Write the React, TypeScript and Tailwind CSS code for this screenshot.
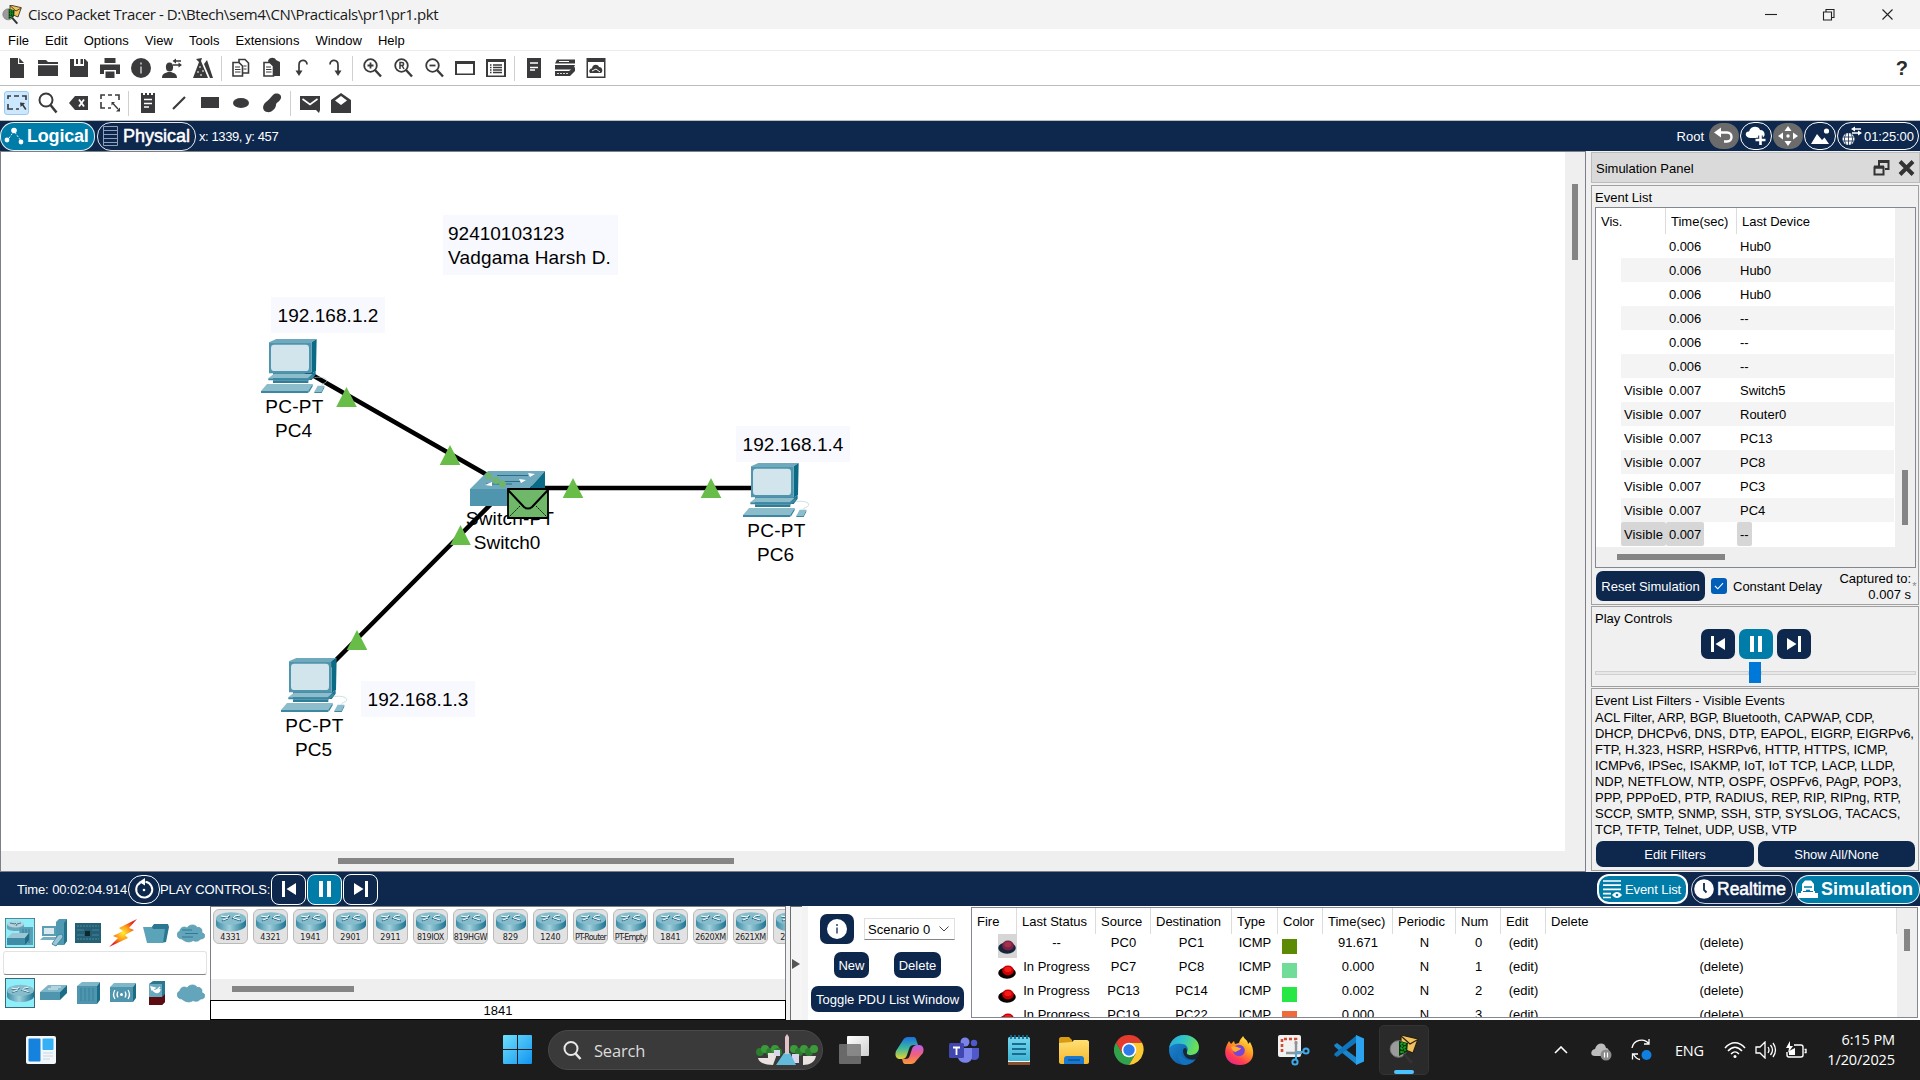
import React from "react";

type P = { children?: React.ReactNode; className?: string };

const DARK = "#3a3a3c";

/* ---------- small drawing helpers ---------- */

function Ico({ children, w = 22, h = 22, vb }: { children: React.ReactNode; w?: number; h?: number; vb?: string }) {
  return (
    <svg width={w} height={h} viewBox={vb ?? `0 0 ${w} ${h}`} fill={DARK} stroke="none" className="block shrink-0">
      {children}
    </svg>
  );
}

function Slot({ children, active }: { children: React.ReactNode; active?: boolean }) {
  return (
    <div className="flex h-full w-[31px] shrink-0 items-center justify-center">
      {active ? (
        <div className="flex h-6 w-[25px] items-center justify-center rounded-[3px] border border-[#99c9ef] bg-[#cce8ff]">{children}</div>
      ) : (
        children
      )}
    </div>
  );
}

const Sep = () => (
  <div className="flex h-full w-[7px] shrink-0 items-center justify-center">
    <div className="h-[25px] w-px bg-[#d0d0d0]" />
  </div>
);

const zoomGlyph = (inner: React.ReactNode) => (
  <Ico>
    <circle cx="9.5" cy="8.5" r="6.3" fill="none" stroke={DARK} strokeWidth="1.8" />
    <path d="M14 13l6 6.5" stroke={DARK} strokeWidth="2.4" />
    {inner}
  </Ico>
);

const fileIcons: React.ReactNode[] = [
  <Ico key="new"><path d="M4 1h8v6h6v14H4zM13.200 1l4.800 5h-4.800z" /></Ico>,
  <Ico key="open"><path d="M1 3h8l2 2h10v2H1zM1 8.200h20V19H1z" /></Ico>,
  <Ico key="save"><path d="M2 2h4v7h10V2h1l3 3v15H2zM8 2h2v5H8zM12.500 2H15v5h-2.500z" /></Ico>,
  <Ico key="print"><path d="M5.500 1h11v5h-11zM1 7.500h20V17h-4v-4H5v4H1zM6.500 14.500h9V21h-9z" /></Ico>,
  <Ico key="info"><circle cx="11" cy="11" r="10" /><path d="M11 9.500v7M11 5.500v2" stroke="#c9c9c9" strokeWidth="1.500" /></Ico>,
  <Ico key="user">
    <ellipse cx="8.500" cy="10" rx="3.600" ry="4.500" />
    <path d="M1 21c0-5 4-5 6-6h3c2 1 6 1 6 6z" />
    <path d="M14 4h6M12 8h6" stroke={DARK} strokeWidth="1.400" />
    <path d="M15 1.500v5L11.500 4zM17.500 5.500v5L21 8z" />
  </Ico>,
  <Ico key="wizard">
    <path d="M4 2l6-1-1 3 7 17H1L7 5z" />
    <path d="M12 7l3-4 5 15 1 3h-3z" />
    <path d="M7 10h2M5 15h2M10 14h2M8 18h2" stroke="#fff" strokeWidth="1.200" />
  </Ico>,
];

const editIcons: React.ReactNode[] = [
  <Ico key="copy">
    <g fill="#fff" stroke={DARK} strokeWidth="1.600">
      <path d="M9 2.500h6l3.500 3.500v10H9z" />
      <path d="M3 5.500h6l3.500 3.500v10H3z" />
    </g>
    <path d="M5 10h5M5 12.500h5.500M5 15h5.500M13.500 9h3M13.500 12h3" stroke={DARK} strokeWidth="1.200" />
  </Ico>,
  <Ico key="paste">
    <path d="M7 4c1-4 7-4 8-1l4 2v14h-6z" />
    <path d="M3 5.500h6l3.500 3.500v10H3z" fill="#fff" stroke={DARK} strokeWidth="1.600" />
    <path d="M5 10h5M5 12.500h5.500M5 15h5.500" stroke={DARK} strokeWidth="1.200" />
  </Ico>,
  <Ico key="undo">
    <path d="M7 15V8c0-6 8-6 8-.5" fill="none" stroke={DARK} strokeWidth="1.700" />
    <path d="M3.500 13.500h7L7 19z" />
  </Ico>,
  <Ico key="redo">
    <path d="M15 15V8c0-6-8-6-8-.5" fill="none" stroke={DARK} strokeWidth="1.700" />
    <path d="M11.500 13.500h7L15 19z" />
  </Ico>,
];

const viewIcons: React.ReactNode[] = [
  <React.Fragment key="in">{zoomGlyph(<path d="M9.500 5.500v6M6.500 8.500h6" stroke={DARK} strokeWidth="1.800" />)}</React.Fragment>,
  <React.Fragment key="reset">
    {zoomGlyph(<path d="M8 12V5.500h2c2.200 0 2.200 3 0 3H8m2 0l2 3.500" fill="none" stroke={DARK} strokeWidth="1.500" />)}
  </React.Fragment>,
  <React.Fragment key="out">{zoomGlyph(<path d="M6.500 8.500h6" stroke={DARK} strokeWidth="1.800" />)}</React.Fragment>,
  <Ico key="rect"><path d="M1 4h20v14H1zM3 7v9.500h16V7z" fillRule="evenodd" /></Ico>,
  <Ico key="list">
    <path d="M1 2h20v18H1zM3 5v13.500h16V5z" fillRule="evenodd" />
    <path d="M5 8h1.500M5 10.500h1.500M5 13h1.500M5 15.500h1.500M8 8h9M8 10.500h9M8 13h9M8 15.500h9" stroke={DARK} strokeWidth="1.400" />
  </Ico>,
];

const deviceIcons: React.ReactNode[] = [
  <Ico key="doc"><path d="M4 1h14v20H4z" /><path d="M7 6h8M7 10.500h8M7 13h5" stroke="#fff" strokeWidth="1.400" /></Ico>,
  <Ico key="stack">
    <path d="M3 2.500h18v4H1zM1 8h20l-2 4.500H1zM1 14h14l6-4v4l-5 5H1z" />
    <path d="M5 4.500h10" stroke="#fff" strokeWidth="1" />
    <path d="M3 16.500h11" stroke="#fff" strokeWidth=".8" strokeDasharray="2 1" />
  </Ico>,
  <Ico key="cloud">
    <path d="M1.500 1h19v20h-19zM3 5v14.500h16V5z" fillRule="evenodd" />
    <path d="M5 16c-2-3 1-5 2-4.500C7 7 13 6.500 14 10c4 0 4 5 2 6z" />
    <path d="M7 14l4-2 4 3" stroke="#fff" fill="none" />
  </Ico>,
];

const selectIcons: React.ReactNode[] = [
  <Ico key="sel">
    <path d="M2 7V4h3M8 4h5M16 4h4v4M2 12v5h5M10 17h3" fill="none" stroke={DARK} strokeWidth="1.600" />
    <path d="M14 10.500l5 .5-1.500 1.500 3 4.500-1.300 1-3-4.500-1.600 1.500z" />
  </Ico>,
  <Ico key="mag">
    <circle cx="9" cy="8" r="6.500" fill="none" stroke={DARK} strokeWidth="2" />
    <path d="M13.500 13l6 7.500" stroke={DARK} strokeWidth="2.600" />
  </Ico>,
  <Ico key="del">
    <path d="M7 4h13v14H7L1 11z" />
    <path d="M11 7.500l5 7M16 7.500l-5 7" stroke="#fff" strokeWidth="1.800" />
  </Ico>,
  <Ico key="rs">
    <path d="M2 7V3h4M9 3h4M16 3h4v5M2 10v6h4M9 16h3" fill="none" stroke={DARK} strokeWidth="1.600" />
    <path d="M14 11.500l5 5.500" stroke={DARK} strokeWidth="1.400" />
    <path d="M12.500 10h3.500l-3.500 3.500zM21 19.500h-4l4-4z" />
  </Ico>,
];

const drawIcons: React.ReactNode[] = [
  <Ico key="note">
    <path d="M4 1h2v2h2V1h2v2h2V1h2v2h2V1h2v20H4z" />
    <path d="M7 7.500h8M7 11.500h8M7 15h5" stroke="#fff" strokeWidth="1.400" />
  </Ico>,
  <Ico key="line"><path d="M5 17L17 5" stroke={DARK} strokeWidth="2.200" /></Ico>,
  <Ico key="rect"><path d="M2 5h18v11H2z" /></Ico>,
  <Ico key="ell"><ellipse cx="11" cy="11" rx="8" ry="5" /></Ico>,
  <Ico key="blob"><path d="M12 3c3-3 9-1 8 3s-5 4-5 7-4 8-9 7-5-7-1-10 4-4 7-7z" /></Ico>,
];

const pduIcons: React.ReactNode[] = [
  <Ico key="m">
    <path d="M1 4h20v14l-1 3-3-3H1z" />
    <path d="M3.500 7l7.500 5.500L18.500 7" fill="none" stroke="#fff" strokeWidth="1.600" />
  </Ico>,
  <Ico key="o"><path d="M1 8L11 1l10 7v13H1zM5 8.500l6 4.500 6-4.500-6-4.500z" fillRule="evenodd" /></Ico>,
];

function TracerLogo({ size }: { size: number }) {
  return (
    <svg width={size} height={size} viewBox="0 0 30 30" className="block shrink-0">
      <path d="M12 0l17 4-5 14-12-5z" fill="#f0c25f" stroke="#2a2010" strokeWidth="1.200" />
      <path d="M12 1l9 8 7-4" fill="none" stroke="#2a2010" strokeWidth="1.200" />
      <circle cx="9.500" cy="14" r="8.300" fill="#9b9b9b" stroke="#777" />
      <path d="M10 6l9 2-1 9-8 4z" fill="#083a08" />
      <path d="M11 9h6M11 13h6M11 17h4M13 7v11M16 8v9" stroke="#1fbf30" strokeWidth="1.100" strokeDasharray="2 1" />
      <path d="M15 19l8 9" stroke="#333" strokeWidth="3" />
    </svg>
  );
}

/* ---------- top bars ---------- */

function TitleBar() {
  return (
    <div className="flex h-[29px] shrink-0 items-center bg-[#f3f3f3] pl-[2px] text-[#1a1a1a]">
      <TracerLogo size={20} />
      <span className="ml-[6px] whitespace-nowrap font-['Open_Sans','Noto_Sans',sans-serif] text-[15px] tracking-[-0.4px]">
        Cisco Packet Tracer - D:\Btech\sem4\CN\Practicals\pr1\pr1.pkt
      </span>
      <div className="ml-auto flex items-center pr-[26px]">
        <svg width="130" height="14" viewBox="0 0 130 14" fill="none" stroke="#222" strokeWidth="1.100">
          <path d="M1 6.500h12" />
          <path d="M59.500 4h8v8h-8zM62 4V1.500h8v8h-2.500" />
          <path d="M118.500 1.500l10 10M128.500 1.500l-10 10" />
        </svg>
      </div>
    </div>
  );
}

function MenuBar() {
  const items = ["File", "Edit", "Options", "View", "Tools", "Extensions", "Window", "Help"];
  return (
    <div className="flex h-[22px] shrink-0 items-center gap-4 border-b border-[#ececec] bg-white pl-2 pt-px tracking-[0.04px]">
      {items.map((i) => (
        <span key={i}>{i}</span>
      ))}
    </div>
  );
}

function Toolbars() {
  return (
    <>
      <div className="flex h-[35px] shrink-0 items-center border-b border-[#bdbdbd] bg-white pl-px">
        {fileIcons.map((i, k) => <Slot key={k}>{i}</Slot>)}
        <Sep />
        {editIcons.map((i, k) => <Slot key={k}>{i}</Slot>)}
        <Sep />
        {viewIcons.map((i, k) => <Slot key={k}>{i}</Slot>)}
        <Sep />
        {deviceIcons.map((i, k) => <Slot key={k}>{i}</Slot>)}
        <span className="ml-auto mr-[12px] text-[20px] font-bold text-[#2b2b2b]">?</span>
      </div>
      <div className="flex h-[35px] shrink-0 items-center border-b border-[#bdbdbd] bg-white pl-px">
        {selectIcons.map((i, k) => <Slot key={k} active={k === 0}>{i}</Slot>)}
        <Sep />
        {drawIcons.map((i, k) => <Slot key={k}>{i}</Slot>)}
        <Sep />
        {pduIcons.map((i, k) => <Slot key={k}>{i}</Slot>)}
      </div>
    </>
  );
}

function Round({ grey, children }: { grey?: boolean; children: React.ReactNode }) {
  return grey ? (
    <div className="mx-px flex h-[26px] w-[30px] items-center justify-center rounded-[13px] bg-[#6b6b6b]">{children}</div>
  ) : (
    <div className="flex h-7 w-8 items-center justify-center rounded-[14px] border-[1.5px] border-white">{children}</div>
  );
}

function NavBar() {
  return (
    <div className="flex h-[30px] shrink-0 items-center bg-[#0d274d] pr-px text-white">
      <div className="flex h-[29px] w-[95px] items-center rounded-[14px] border-[1.5px] border-white/90 bg-[#007ca8] pl-[3px]">
        <svg width="21" height="19" viewBox="0 0 21 19" fill="#fff">
          <path d="M3 14L10 4l7 10" fill="none" stroke="#fff" strokeWidth=".9" strokeDasharray="2 1.500" />
          <circle cx="10" cy="3.500" r="2.800" /><circle cx="3" cy="13" r="2.400" /><circle cx="17" cy="15" r="2.400" />
        </svg>
        <span className="ml-[2px] text-[18px] font-bold tracking-[-0.2px]">Logical</span>
      </div>
      <div className="ml-[2px] flex h-[29px] w-[99px] items-center rounded-[14px] border-[1.5px] border-white/90 pl-[5px]">
        <svg width="15" height="20" viewBox="0 0 15 20" fill="none" stroke="#8fa0ba" strokeWidth="1">
          <path d="M.5.500h14v19H.500zM.500 4.500h14M.500 8.500h14M.500 12.500h14M.500 16.500h14" />
        </svg>
        <span className="ml-[5px] text-[18px] [-webkit-text-stroke:0.5px_white]">Physical</span>
      </div>
      <span className="ml-[3px] text-[13px] tracking-[-0.4px]">x: 1339, y: 457</span>
      <div className="ml-auto flex items-center">
        <span className="mr-1">Root</span>
        <Round grey>
          <svg width="22" height="18" viewBox="0 0 22 18" fill="#fff">
            <path d="M7 5.500h7c6 0 6 9 0 9h-3" fill="none" stroke="#fff" strokeWidth="2.400" />
            <path d="M8 .500v10L1 5.500z" />
          </svg>
        </Round>
        <Round>
          <svg width="22" height="22" viewBox="0 0 22 22" fill="#fff">
            <path d="M5 13C-1 12 0 6 4 6.500 6 0 14 1 15 5c6 0 6 8 1 8z" />
            <path d="M15.500 10.500v9M11 15h9" stroke="#0d274d" strokeWidth="4.500" />
            <path d="M15.500 10v10M10.500 15h10" stroke="#fff" strokeWidth="2.600" />
          </svg>
        </Round>
        <Round grey>
          <svg width="22" height="22" viewBox="0 0 22 22" fill="#fff">
            <circle cx="11" cy="11" r="1.700" />
            <path d="M11 1l3.500 5h-7zM11 21l3.500-5h-7zM1 11l5-3.500v7zM21 11l-5-3.500v7z" />
          </svg>
        </Round>
        <Round>
          <svg width="22" height="20" viewBox="0 0 22 20" fill="#fff">
            <path d="M2 18L8 8l5 6 2.500-2.500L20 18z" /><circle cx="17.500" cy="5" r="2.600" />
          </svg>
        </Round>
        <div className="ml-px flex h-7 w-[82px] items-center rounded-[14px] border-[1.500px] border-white pl-[2px]">
          <svg width="22" height="20" viewBox="0 0 22 20" fill="none" stroke="#fff">
            <circle cx="8.500" cy="13" r="6" fill="#fff" stroke="none" />
            <path d="M3 11h11M3 15h11M8.500 7v12M6 8c-2 3-2 7 0 10M11 8c2 3 2 7 0 10" stroke="#0d274d" strokeWidth=".8" />
            <path d="M13 3h8M12 7h8" strokeWidth="1.400" />
            <path d="M15 .500v5L11 3zM18 4.500v5L22 7z" fill="#fff" stroke="none" />
          </svg>
          <span className="ml-[2px] tracking-[-0.1px]">01:25:00</span>
        </div>
      </div>
    </div>
  );
}

/* ---------- workspace ---------- */

function PC() {
  return (
    <svg width="67" height="55" viewBox="0 0 201 165" className="block">
      <path d="M24 10L46 0h121l-15 10z" fill="#6fa9bd" />
      <path d="M152 10l15-10-2 96-13 8z" fill="#0b6a86" />
      <path d="M24 10h128v93H24z" fill="#4f95ad" />
      <rect x="30" y="17" width="114" height="79" rx="10" fill="#d3e5ec" />
      <path d="M36 103h118l10-6v10l-12 16H36z" fill="#1e7391" />
      <path d="M22 118l16-13h116l-14 14z" fill="#8dbccb" />
      <path d="M22 118h118v6H22zM140 118l18-12v8l-18 12z" fill="#3c88a2" />
      <path d="M36 124h106v8H36z" fill="#2f7e99" />
      <path d="M0 156l18-21h137l-14 21z" fill="#8dbccb" />
      <path d="M0 156h141v6H0zM141 156l14-21v7l-12 20z" fill="#3c88a2" />
      <path d="M160 116c20-4 42 2 36 12-4 6-16 6-14 12" fill="none" stroke="#b5ccd5" strokeWidth="2" />
      <path d="M160 158l10-18h20l-9 18z" fill="#8dbccb" />
      <path d="M160 158h21l9-18v6l-8 16h-22z" fill="#3c88a2" />
    </svg>
  );
}

const pcs = [
  { name: "PC4", pos: "left-[260px] top-[187px]" },
  { name: "PC5", pos: "left-[280px] top-[506px]" },
  { name: "PC6", pos: "left-[742px] top-[311px]" },
];

const notes = [
  { t: "192.168.1.2", pos: "left-[270px] top-[145px]" },
  { t: "192.168.1.4", pos: "left-[735px] top-[274px]" },
  { t: "192.168.1.3", pos: "left-[360px] top-[529px]" },
];

const leds = [
  [346.5, 387],
  [450, 445],
  [573, 478],
  [711, 478],
  [460.5, 525],
  [357, 630],
];

function Workspace() {
  return (
    <div className="relative h-[699px] w-[1564px] overflow-hidden bg-white text-[19px] text-black">
      {/* free canvas: the children sit at the topology's own coordinates */}
      <div className="absolute left-[442px] top-[63px] h-[60px] w-[175px] bg-[#f8f8ff] pl-[5px] pt-[7px] leading-6">
        92410103123
        <br />
        <span className="whitespace-nowrap tracking-[0.18px]">Vadgama Harsh D.</span>
      </div>
      {notes.map((n) => (
        <div key={n.t} className={`absolute flex h-9 w-[114px] items-center justify-center bg-[#f8f8ff] tracking-[0.05px] ${n.pos}`}>
          {n.t}
        </div>
      ))}
      <svg width="1564" height="699" viewBox="1 152 1564 699" className="absolute left-0 top-0">
        <g stroke="#000" strokeWidth="4.500">
          <path d="M300 368L489 476M530 488h230M495 500L330 666" />
        </g>
      </svg>
      {pcs.map((p) => (
        <div key={p.name} className={`absolute flex w-[67px] flex-col items-center leading-6 ${p.pos}`}>
          <PC />
          <span className="mt-px tracking-[0.3px]">PC-PT</span>
          <span className="mr-[2px]">{p.name}</span>
        </div>
      ))}
      <svg width="1564" height="699" viewBox="1 152 1564 699" className="absolute left-0 top-0">
        <path d="M488 471h57l-16 18h-59z" fill="#6ea9bd" />
        <path d="M470 489h59v17h-59z" fill="#4f95ad" />
        <path d="M545 471v17l-16 18v-17z" fill="#0b6a86" />
        <path d="M497 475.500h28M514 475.500h14M486 484h26M500 481.500h22" stroke="#2a6f88" strokeWidth="1" />
        <path d="M528 473l7 1-5 3zM519 479l7 1-5 3zM492 482l-7 3 7 1z" fill="#fff" />
        <g fill="#6fb56a">
          <circle cx="488.500" cy="476" r="3.500" /><circle cx="496" cy="480.500" r="3.500" /><circle cx="502.500" cy="484" r="3.500" />
        </g>
        {leds.map(([x, y]) => (
          <path key={x} d={`M${x} ${y}l10.300 20h-20.600z`} fill="#68bd49" />
        ))}
      </svg>
      <div className="absolute left-[463px] top-[355px] flex w-[92px] flex-col items-center leading-6">
        <span className="whitespace-nowrap tracking-[0.2px]">Switch-PT</span>
        <span className="mr-[6px]">Switch0</span>
      </div>
      <svg width="42" height="31" viewBox="0 0 42 31" className="absolute left-[506px] top-[336px]">
        <path d="M1 1h40v29H1z" fill="#6fb869" stroke="#000" strokeWidth="1.800" />
        <path d="M1 2l16 17c2 2 6 2 8 0L41 2" fill="none" stroke="#000" strokeWidth="2" />
        <path d="M1 30l12-12M41 30L29 18" stroke="#000" strokeWidth=".9" strokeDasharray="2 1" />
      </svg>
    </div>
  );
}

function WorkspaceArea() {
  return (
    <div className="flex w-[1586px] shrink-0 flex-col border border-[#7d7f86] bg-[#efefef]">
      <div className="flex h-[699px]">
        <Workspace />
        <div className="w-5 bg-[#efefef] pl-[7px] pt-[32px]">
          <div className="h-[76px] w-[6px] bg-[#858585]" />
        </div>
      </div>
      <div className="pl-[337px] pt-[7px]">
        <div className="h-[6px] w-[396px] bg-[#858585]" />
      </div>
    </div>
  );
}

/* ---------- simulation panel ---------- */

const events: [string, string, string][] = [
  ["", "0.006", "Hub0"],
  ["", "0.006", "Hub0"],
  ["", "0.006", "Hub0"],
  ["", "0.006", "--"],
  ["", "0.006", "--"],
  ["", "0.006", "--"],
  ["Visible", "0.007", "Switch5"],
  ["Visible", "0.007", "Router0"],
  ["Visible", "0.007", "PC13"],
  ["Visible", "0.007", "PC8"],
  ["Visible", "0.007", "PC3"],
  ["Visible", "0.007", "PC4"],
  ["Visible", "0.007", "--"],
];

const Group = ({ children, className = "" }: P) => (
  <div className={`flex w-[328px] flex-col border border-[#a0a0a0] bg-[#f0f0f0] ${className}`}>{children}</div>
);

const Btn = ({ children, className = "" }: P) => (
  <div className={`flex items-center justify-center whitespace-nowrap rounded-[7px] bg-[#0d274d] text-white ${className}`}>{children}</div>
);

const BackGlyph = () => (
  <svg width="18" height="18" viewBox="0 0 18 18" fill="#fff"><path d="M2 1h3v16H2zM16 3v12L6.500 9z" /></svg>
);
const PauseGlyph = () => (
  <svg width="18" height="18" viewBox="0 0 18 18" fill="#fff"><path d="M3 1h4v16H3zM11 1h4v16h-4z" /></svg>
);
const FwdGlyph = () => (
  <svg width="18" height="18" viewBox="0 0 18 18" fill="#fff"><path d="M13 1h3v16h-3zM2 3v12l9.500-6z" /></svg>
);

function SimulationPanel() {
  return (
    <div className="flex flex-1 flex-col bg-[#f0f0f0] pl-[5px]">
      <div className="mt-px flex h-[31px] shrink-0 items-center border border-[#bcbcbc] bg-[#dadada] pl-1 pt-px">
        <span>Simulation Panel</span>
        <svg width="42" height="18" viewBox="0 0 42 18" className="ml-auto mr-[4px]" fill="none" stroke="#333">
          <path d="M1.500 8.500h9v7h-9zM6 7V2h9.500v8H12" strokeWidth="2" />
          <path d="M1 8h10M5 2.500h11" strokeWidth="3" />
          <path d="M27 2.500l13 13M40 2.500l-13 13" strokeWidth="4" />
        </svg>
      </div>

      <Group className="mt-[2px] h-[420px] shrink-0 pl-[3px]">
        <span className="flex h-[21px] items-center pt-px">Event List</span>
        <div className="flex h-[361px] w-[321px] flex-col border border-[#828790] bg-white">
          <div className="flex h-[339px]">
            <div className="flex w-[299px] shrink-0 flex-col">
              <div className="flex h-[26px] shrink-0 items-center">
                <div className="flex h-full w-[70px] items-center border-r border-[#dcdcdc] pl-[5px]">Vis.</div>
                <div className="flex h-full w-[71px] items-center border-r border-[#dcdcdc] pl-[5px]">Time(sec)</div>
                <div className="pl-[5px]">Last Device</div>
              </div>
              {events.map(([v, t, d], i) => {
                const sel = i === events.length - 1;
                return (
                  <div key={i} className={`ml-[25px] flex h-6 w-[273px] shrink-0 items-center ${i % 2 ? "bg-[#f4f4f4]" : ""}`}>
                    <div className={`flex h-full w-[45px] items-center rounded-[2px] pl-[3px] tracking-[0.15px] ${sel ? "bg-[#d6d6d6]" : ""}`}>{v}</div>
                    <div className={`flex h-full w-[38px] items-center rounded-[2px] pl-[3px] tracking-[-0.1px] ${sel ? "bg-[#d6d6d6]" : ""}`}>{t}</div>
                    <div className={`ml-[33px] flex h-full items-center rounded-[2px] px-[3px] ${sel ? "bg-[#d6d6d6]" : ""}`}>{d}</div>
                  </div>
                );
              })}
            </div>
            <div className="flex-1 bg-[#efefef] pl-[7px] pt-[262px]">
              <div className="h-[55px] w-[6px] bg-[#858585]" />
            </div>
          </div>
          <div className="flex-1 bg-[#efefef] pl-[21px] pt-[7px]">
            <div className="h-[6px] w-[108px] bg-[#858585]" />
          </div>
        </div>
        <div className="mt-[3px] flex h-[30px] items-center">
          <Btn className="ml-px h-[30px] w-[109px]">Reset Simulation</Btn>
          <div className="ml-[6px] flex h-4 w-4 items-center justify-center rounded-[3px] bg-[#005fb8]">
            <svg width="10" height="8" viewBox="0 0 10 8" fill="none" stroke="#fff" strokeWidth="1.100"><path d="M1 4l2.800 2.800L9 1.200" /></svg>
          </div>
          <span className="ml-[6px]">Constant Delay</span>
          <div className="ml-auto flex items-center">
            <div className="pt-px text-right leading-4">Captured to:<br />0.007 s</div>
            <span className="w-[7px] text-center text-[11px] text-[#888]">*</span>
          </div>
        </div>
      </Group>

      <Group className="mt-[1px] h-[81px] shrink-0 pl-[3px]">
        <span className="flex h-[22px] items-center pt-px">Play Controls</span>
        <div className="flex gap-1 pl-[106px]">
          <Btn className="h-[30px] w-[34px]"><BackGlyph /></Btn>
          <Btn className="h-[30px] w-[34px] bg-[#007ca8]!"><PauseGlyph /></Btn>
          <Btn className="h-[30px] w-[34px]"><FwdGlyph /></Btn>
        </div>
        <div className="mt-[3px] flex h-[21px] w-[321px] items-center">
          <div className="h-1 w-[154px] border border-[#d0d0d0] bg-[#e7e7e7]" />
          <div className="h-[21px] w-3 bg-[#0078d7]" />
          <div className="h-1 flex-1 border border-[#d0d0d0] bg-[#e7e7e7]" />
        </div>
      </Group>

      <Group className="mt-[1px] h-[183px] shrink-0 pl-[3px] pt-px">
        <span className="flex h-5 items-center tracking-[0.02px]">Event List Filters - Visible Events</span>
        <div className="whitespace-pre leading-4 tracking-[-0.04px]">
          {`ACL Filter, ARP, BGP, Bluetooth, CAPWAP, CDP,
DHCP, DHCPv6, DNS, DTP, EAPOL, EIGRP, EIGRPv6,
FTP, H.323, HSRP, HSRPv6, HTTP, HTTPS, ICMP,
ICMPv6, IPSec, ISAKMP, IoT, IoT TCP, LACP, LLDP,
NDP, NETFLOW, NTP, OSPF, OSPFv6, PAgP, POP3,
PPP, PPPoED, PTP, RADIUS, REP, RIP, RIPng, RTP,
SCCP, SMTP, SNMP, SSH, STP, SYSLOG, TACACS,
TCP, TFTP, Telnet, UDP, USB, VTP`}
        </div>
        <div className="mt-[3px] flex gap-1 pl-px">
          <Btn className="h-[26px] w-[158px]">Edit Filters</Btn>
          <Btn className="h-[26px] w-[157px]">Show All/None</Btn>
        </div>
      </Group>
    </div>
  );
}

/* ---------- time bar ---------- */

function TimeBar() {
  return (
    <div className="flex h-[34px] shrink-0 items-center bg-[#0d274d] pl-[17px] text-white">
      <span className="w-[111px] whitespace-nowrap tracking-[-0.08px]">Time: 00:02:04.914</span>
      <div className="flex h-[29px] w-8 items-center justify-center rounded-[14px] border border-white">
        <svg width="22" height="22" viewBox="0 0 22 22" fill="#fff">
          <path d="M7.500 4.500a8 8 0 1 0 5-.8" fill="none" stroke="#fff" strokeWidth="2" />
          <path d="M12 0v7.500L6 4z" /><circle cx="11" cy="12" r="1.300" />
        </svg>
      </div>
      <span className="w-[111px] whitespace-nowrap tracking-[-0.08px]">PLAY CONTROLS:</span>
      <div className="flex gap-px">
        <div className="flex h-[31px] w-[35px] items-center justify-center rounded-[8px] border border-white"><BackGlyph /></div>
        <div className="flex h-[31px] w-[35px] items-center justify-center rounded-[8px] border border-white bg-[#007ca8]"><PauseGlyph /></div>
        <div className="flex h-[31px] w-[35px] items-center justify-center rounded-[8px] border border-white"><FwdGlyph /></div>
      </div>
      <div className="ml-auto flex items-center">
        <div className="flex h-[30px] w-[91px] items-center rounded-[12px] border-2 border-white bg-[#007ca8] pl-[4px]">
          <svg width="19" height="20" viewBox="0 0 19 20" fill="none" stroke="#fff" strokeWidth="1.700">
            <path d="M0 2h18M0 6.200h18M0 10.400h18M0 14.600h8M0 18.500h8" />
            <path d="M9 16c3-4 7-4 10 0-3 4-7 4-10 0z" fill="#fff" stroke="none" /><circle cx="14" cy="16" r="1.300" fill="#007ca8" stroke="none" />
          </svg>
          <span className="ml-[3px] whitespace-nowrap text-[13px] tracking-[-0.1px]">Event List</span>
        </div>
        <div className="ml-[3px] flex h-[29px] w-[102px] items-center rounded-[14px] border border-white/80 pl-[2px]">
          <svg width="20" height="20" viewBox="0 0 20 20"><circle cx="10" cy="10" r="9.800" fill="#fff" /><path d="M10 4v7l2.500 2.500" fill="none" stroke="#0d274d" strokeWidth="1.800" /></svg>
          <span className="ml-[3px] text-[17.500px] [-webkit-text-stroke:0.5px_white]">Realtime</span>
        </div>
        <div className="ml-[2px] flex h-[29px] w-[125px] items-center rounded-[14px] border-[1.500px] border-white/90 bg-[#007ca8] pl-[2px]">
          <svg width="20" height="18" viewBox="0 0 20 18" fill="#fff">
            <path d="M4 4l3-3.500h6L16 4v7H4zM0 18v-5h3v-2h2v3h10v-3h2v2h3v5z" /><path d="M5 12h10v2H5z" />
            <path d="M6 7h8M8 10.500h4" stroke="#007ca8" strokeWidth="1.500" />
          </svg>
          <span className="ml-[3px] text-[18px] font-bold">Simulation</span>
        </div>
      </div>
    </div>
  );
}

/* ---------- device palette ---------- */

function Router({ w = 30, h = 20, id }: { w?: number; h?: number; id: string }) {
  return (
    <svg width={w} height={h} viewBox="0 0 30 20" className="block">
      <defs>
        <linearGradient id={id} x1="0" x2="1">
          <stop offset="0" stopColor="#3c8ba5" /><stop offset=".45" stopColor="#9fcfdc" /><stop offset="1" stopColor="#1b7390" />
        </linearGradient>
      </defs>
      <path d="M0 6v7c0 3.500 7 6.500 15 6.500s15-3 15-6.500V6z" fill={`url(#${id})`} />
      <ellipse cx="15" cy="6.500" rx="15" ry="6.200" fill="#86bccc" />
      <path d="M5 5l7 1 2-2M24 4l-6 1-2 2M6 9l6-2M25 9l-7-2" fill="none" stroke="#2a6f88" strokeWidth="1.100" />
      <path d="M5 4l6 1 2-2M24 3l-5 1-2 2M7 8l5-2M24 8l-6-2" fill="none" stroke="#fff" strokeWidth="1" />
    </svg>
  );
}

const cloud = (lines: boolean) => (
  <svg width="28" height="20" viewBox="0 0 28 20">
    <path d="M5 16C-1 16-1 9 3 8c0-4 5-5 7-3 2-4 9-4 10-.5 4-1 6 3 4.500 5 5 1 4 7-1 6.500-2 3-6 2.500-7.500 1.500-3 2.500-8 1.500-11-1.500z" fill="#63a6bb" stroke="#4e90a8" strokeWidth=".6" />
    {lines && <path d="M5 7h10M8 10.500h13M5 14h11" stroke="#2f7a94" strokeWidth="1.100" />}
  </svg>
);

const rowA: React.ReactNode[] = [
  <svg key="net" width="30" height="30" viewBox="0 0 30 30">
    <path d="M0 0h30v30H0z" fill="#8eeefa" stroke="#3a6b75" strokeWidth="1.500" />
    <path d="M2 6v4c0 4 17 4 17 0V6z" fill="#6ba5b8" /><ellipse cx="10.500" cy="6" rx="8.500" ry="3.500" fill="#b4d2db" />
    <path d="M5 5l5 1 1-1M16 5l-4 1-1 2" fill="none" stroke="#3f7f95" />
    <path d="M14 11l3-2h11v18H16z" fill="#58a0b6" /><path d="M18 11v14M21 11v14M24 11v14" stroke="#35809a" />
    <path d="M2 20l5-5h17l-4 5z" fill="#9cc6d3" /><path d="M2 20h18v7H2z" fill="#3f8ca6" /><path d="M20 20l4-5v7l-4 5z" fill="#1b6c87" />
  </svg>,
  <svg key="end" width="28" height="28" viewBox="0 0 28 28">
    <path d="M16 3l3-3h8v22l-3 4h-8z" fill="#4f9ab2" /><path d="M24 4l3-4v22l-3 4z" fill="#23738d" />
    <path d="M2 7h14v10H2z" fill="#5b9fb5" /><path d="M4 9h10v6H4z" fill="#dbe9ee" /><path d="M0 21l3-3h14l-3 3z" fill="#76afc1" />
    <path d="M12 25l6-9 4-1 1 3-7 9z" fill="#9cc6d3" stroke="#3f8ca6" />
  </svg>,
  <svg key="comp" width="26" height="20" viewBox="0 0 26 20">
    <path d="M0 0h26v20H0z" fill="#245f74" /><path d="M2 3h22M2 16h22" stroke="#4b8ba0" strokeWidth="1" strokeDasharray="2 1" />
    <path d="M2 7h7M17 7h7M2 12h7M17 12h7" stroke="#3b7a90" strokeWidth="1.600" />
    <path d="M10 8h5v5h-5z" fill="#0d2831" />
  </svg>,
  <svg key="conn" width="28" height="28" viewBox="0 0 28 28">
    <defs><radialGradient id="bolt"><stop offset="0" stopColor="#ffee3a" /><stop offset=".5" stopColor="#ff9a16" /><stop offset="1" stopColor="#e2231a" /></radialGradient></defs>
    <path d="M28 0L10 9l4 3-10 5 5 2-9 9 19-9-3-3 9-5-5-2z" fill="url(#bolt)" />
  </svg>,
  <svg key="misc" width="27" height="21" viewBox="0 0 27 21">
    <path d="M8 5l3-4h14l1 3-3 15-5 1z" fill="#2b7690" /><path d="M4 20L0 4h9l1 2h12l-2 14z" fill="#5ba3b9" />
  </svg>,
  <React.Fragment key="multi">{cloud(true)}</React.Fragment>,
];

const rowB: React.ReactNode[] = [
  <div key="r" className="flex h-[30px] w-[30px] items-center justify-center border-[1.5px] border-[#3a6b75] bg-[#8eeefa]"><Router id="gsel" w={27} h={19} /></div>,
  <svg key="sw" width="28" height="16" viewBox="0 0 28 16">
    <path d="M0 7l8-7h19l-7 7z" fill="#7fb6c8" /><path d="M0 7h20v8H0z" fill="#4f95ad" /><path d="M27 0v8l-7 7V7z" fill="#1b6c87" /><path d="M8 4h10M11 2h10" stroke="#e7f2f5" />
  </svg>,
  <svg key="hub" width="23" height="22" viewBox="0 0 23 22">
    <path d="M0 4l5-4h18l-3 4z" fill="#7fb6c8" /><path d="M0 4h20v18H0z" fill="#4f95ad" /><path d="M23 0v18l-3 4V4z" fill="#1b6c87" /><path d="M4 6v13M8 6v13M12 6v13M16 6v13" stroke="#35809a" />
  </svg>,
  <svg key="wl" width="26" height="20" viewBox="0 0 26 20">
    <path d="M0 4l4-4h22l-3 4z" fill="#7fb6c8" /><path d="M0 4h23v15H0z" fill="#4f95ad" /><path d="M26 0v15l-3 4V4z" fill="#1b6c87" />
    <circle cx="11.500" cy="11.500" r="1.500" fill="#fff" /><path d="M8 8.500q-2 3 0 6M5 7q-3 4.500 0 9M15 8.500q2 3 0 6M18 7q3 4.500 0 9" fill="none" stroke="#fff" strokeWidth="1.200" />
  </svg>,
  <svg key="sec" width="16" height="24" viewBox="0 0 16 24">
    <path d="M0 3l4-3h12v21l-3 3H0z" fill="#2b7690" /><path d="M0 3h13v13H0z" fill="#68a9bd" /><path d="M0 16h13l3-3v8l-3 3H0z" fill="#5d0d12" />
    <path d="M2 6l4 1-3 2zM4 9c2 4 7 3 7-1M11 6l-4 4" stroke="#fff" strokeWidth="1.300" fill="#fff" />
  </svg>,
  <React.Fragment key="wan">{cloud(false)}</React.Fragment>,
];

const routers = ["4331", "4321", "1941", "2901", "2911", "819IOX", "819HGW", "829", "1240", "PT-Router", "PT-Empty", "1841", "2620XM", "2621XM", "2811"];

function Palette() {
  return (
    <>
      <div className="flex w-[210px] shrink-0 flex-col bg-white pt-3">
        <div className="flex h-[30px] items-center">
          <div className="w-[3px]" />
          {rowA.map((n, k) => <div key={k} className="flex w-[34.200px] justify-center">{n}</div>)}
        </div>
        <div className="ml-[3px] mt-[3px] h-6 w-[204px] rounded-[3px] border border-[#e3e3e3] border-b-[#868686] bg-white" />
        <div className="mt-[3px] flex h-[30px] items-center">
          <div className="w-[3px]" />
          {rowB.map((n, k) => <div key={k} className="flex w-[34.200px] justify-center">{n}</div>)}
        </div>
      </div>
      <div className="flex w-[576px] shrink-0 flex-col">
        <div className="flex h-[94px] flex-col border border-b-0 border-[#7d7f86] bg-white">
          <div className="flex h-[72px] gap-[5px] overflow-hidden pl-[2px] pt-[2px]">
            {routers.map((r, i) => (
              <div key={r} className="flex h-[35px] w-[35px] shrink-0 flex-col items-center rounded-[6px] border border-[#bababa] bg-[#e2e2e2] pt-[2px]">
                <Router id={`g${i}`} />
                <span className={`mt-px whitespace-nowrap font-['DejaVu_Sans',sans-serif] text-[8px] leading-[9px] text-[#222] ${r.length > 7 ? "tracking-[-0.8px]" : r.length > 5 ? "tracking-[-0.35px]" : ""}`}>{r}</span>
              </div>
            ))}
          </div>
          <div className="flex-1 bg-[#efefef] pl-[21px] pt-[7px]">
            <div className="h-[6px] w-[122px] bg-[#858585]" />
          </div>
        </div>
        <div className="flex h-5 items-center justify-center border border-black bg-white">1841</div>
      </div>
      <div className="flex w-[22px] shrink-0 bg-[#f3f3f3] pl-1">
        <div className="flex w-[12px] items-center border-l border-t border-[#6e6e6e] bg-[#f5f5f5]">
          <svg width="9" height="10" viewBox="0 0 9 10" fill="#555"><path d="M1 0l8 5-8 5z" /></svg>
        </div>
      </div>
    </>
  );
}

/* ---------- PDU list ---------- */

type Pdu = [string, string, string, string, string, string];
const pdus: Pdu[] = [
  ["--", "PC0", "PC1", "bg-[#5c8a05]", "91.671", "0"],
  ["In Progress", "PC7", "PC8", "bg-[#70dc98]", "0.000", "1"],
  ["In Progress", "PC13", "PC14", "bg-[#27e744]", "0.002", "2"],
  ["In Progress", "PC19", "PC22", "bg-[#f06a3c]", "0.000", "3"],
];

const colW = ["w-[45px]", "w-[79px]", "w-[55px]", "w-[81px]", "w-[46px]", "w-[45px]", "w-[70px]", "w-[63px]", "w-[45px]", "w-[45px]", "w-[351px]"];
const heads = ["Fire", "Last Status", "Source", "Destination", "Type", "Color", "Time(sec)", "Periodic", "Num", "Edit", "Delete"];

function FireButton({ dim }: { dim?: boolean }) {
  return (
    <svg width="18" height="14" viewBox="0 0 18 14" className="block">
      <ellipse cx="9" cy="8" rx="8.800" ry="5.800" fill={dim ? "#17243c" : "#0a0000"} />
      <ellipse cx="10" cy="5.500" rx="5.800" ry="5" fill={dim ? "#7c2344" : "#c40000"} />
      <ellipse cx="10" cy="4.500" rx="3.600" ry="2.800" fill={dim ? "#a0324f" : "#f51a1a"} />
    </svg>
  );
}

function PduArea() {
  return (
    <div className="flex flex-1 bg-white">
      <div className="flex w-[163px] shrink-0 flex-col pl-[3px]">
        <div className="mt-2 flex items-center">
          <Btn className="ml-[9px] h-[30px] w-[34px]">
            <svg width="20" height="20" viewBox="0 0 20 20"><circle cx="10" cy="10" r="10" fill="#fff" /><path d="M10 8.500v6M10 5v2" stroke="#0d274d" strokeWidth="1.300" /></svg>
          </Btn>
          <div className="ml-[10px] flex h-[22px] w-[91px] items-center border border-[#e0e0e0] border-b-[#868686] bg-white pl-[3px]">
            <span className="whitespace-nowrap">Scenario 0</span>
            <svg width="10" height="6" viewBox="0 0 10 6" fill="none" stroke="#444" className="ml-auto mr-[5px]"><path d="M.5.500l4.500 4.500L9.500.500" /></svg>
          </div>
        </div>
        <div className="mt-2 flex">
          <Btn className="ml-[23px] h-[26px] w-[35px]">New</Btn>
          <Btn className="ml-[25px] h-[26px] w-[47px]">Delete</Btn>
        </div>
        <Btn className="mt-2 h-[26px] w-[153px]">Toggle PDU List Window</Btn>
      </div>
      <div className="mt-px flex h-[111px] w-[947px] overflow-hidden border border-[#828790]">
        <div className="flex w-[925px] shrink-0 flex-col">
          <div className="flex h-[26px] shrink-0">
            {heads.map((h, i) => (
              <div key={h} className={`flex shrink-0 items-center whitespace-nowrap border-r border-[#dcdcdc] pl-[5px] ${colW[i]}`}>{h}</div>
            ))}
          </div>
          {pdus.map(([s, a, b, c, t, n], i) => (
            <div key={n} className="flex h-6 shrink-0 [&>div]:flex [&>div]:shrink-0 [&>div]:justify-center [&>div]:whitespace-nowrap [&>div]:pt-px">
              <div className="w-[45px]">
                <div className={`ml-auto flex h-6 w-[19px] items-end pb-[4px] ${i === 0 ? "-mt-px bg-[#d6d6d6]" : ""}`}><FireButton dim={i === 0} /></div>
              </div>
              <div className="w-[79px]">{s}</div>
              <div className="w-[55px]">{a}</div>
              <div className="w-[81px]">{b}</div>
              <div className="w-[46px]">ICMP</div>
              <div className="w-[45px]"><div className={`mr-[23px] mt-[4px] h-[15px] w-[15px] ${c}`} /></div>
              <div className="w-[70px]">{t}</div>
              <div className="w-[63px]">N</div>
              <div className="w-[45px]">{n}</div>
              <div className="w-[45px]">(edit)</div>
              <div className="w-[351px]">(delete)</div>
            </div>
          ))}
        </div>
        <div className="flex-1 bg-[#efefef] pl-[7px] pt-[21px]">
          <div className="h-[22px] w-[6px] bg-[#858585]" />
        </div>
      </div>
    </div>
  );
}

/* ---------- taskbar ---------- */

const Box = ({ children, className = "" }: P) => (
  <div className={`flex h-[50px] w-[50px] shrink-0 items-center justify-center ${className}`}>{children}</div>
);

function City() {
  return (
    <svg width="62" height="32" viewBox="0 0 62 32">
      {[4, 9, 14, 19, 22, 38, 43, 48, 53, 58].map((x, i) => (
        <circle key={x} cx={x} cy={i % 2 ? 15 : 18} r="4" fill={i % 2 ? "#3d9a3b" : "#2c7d30"} />
      ))}
      <path d="M2 24h10v-5h8v4l-3 8c-7 0-14-2-15-7zM60 22H47v9c7 0 12-3 13-9z" fill="#e9e2e0" />
      <path d="M18 16h6v6h-6zM36 20h7v9h-7z" fill="#d9d6ec" />
      <path d="M28 19h6l6 12H20z" fill="#63bbdc" />
      <path d="M29 20V3l2-3 2 3v17z" fill="#e0c3c8" />
    </svg>
  );
}

const G = ({ id, a, b, v }: { id: string; a: string; b: string; v?: boolean }) => (
  <linearGradient id={id} x1="0" y1="0" x2={v ? "0" : "1"} y2="1"><stop offset="0" stopColor={a} /><stop offset="1" stopColor={b} /></linearGradient>
);

const apps: React.ReactNode[] = [
  <svg key="tv" width="30" height="28" viewBox="0 0 30 28">
    <defs><G id="tv" a="#fff" b="#cfcfcf" /></defs>
    <rect x="8" y="0" width="22" height="20" rx="1" fill="url(#tv)" /><rect x="0" y="8" width="22" height="20" rx="1" fill="#777" opacity=".85" />
  </svg>,
  <svg key="cop" width="29" height="27" viewBox="0 0 29 27">
    <defs>
      <linearGradient id="c1" x2="0" y2="1"><stop stopColor="#1c6fe0" /><stop offset=".5" stopColor="#3ab7a0" /><stop offset="1" stopColor="#e6d42c" /></linearGradient>
      <linearGradient id="c2" x2="0" y2="1"><stop stopColor="#b45df0" /><stop offset=".5" stopColor="#f0607c" /><stop offset="1" stopColor="#f99a3a" /></linearGradient>
    </defs>
    <path d="M8 3c1-2 3-3 5-3h5c3 0 3 2 4 5l1 3h-4c-3 0-4 1-5 4l-2 6c-1 3-3 4-5 4H4C0 21 0 17 1 14z" fill="url(#c1)" />
    <path d="M21 24c-1 2-3 3-5 3h-5c-3 0-3-2-4-5h3c3 0 4-1 5-4l2-6c1-3 3-4 5-4h3c4 1 4 5 3 8z" fill="url(#c2)" />
  </svg>,
  <svg key="teams" width="30" height="26" viewBox="0 0 30 26">
    <circle cx="16" cy="5" r="4.500" fill="#7b83eb" /><circle cx="25" cy="6" r="3.200" fill="#5059c9" />
    <path d="M22 11h8v8c0 4-5 5-8 3z" fill="#5059c9" /><path d="M9 11h14v9c0 7-12 8-14 1z" fill="#7b83eb" />
    <rect y="6" width="15" height="15" rx="1.500" fill="#4048b0" /><path d="M4 10.500h7M7.500 10.500v7.500" stroke="#fff" strokeWidth="1.800" />
  </svg>,
  <svg key="note" width="24" height="30" viewBox="0 0 24 30">
    <defs><G id="np" a="#74d8ee" b="#3fb4d4" v /></defs>
    <path d="M1 25h22v5H1z" fill="#8a4f2c" /><path d="M1 25h22v2H1z" fill="#f4f4f4" />
    <rect x="1" y="2" width="22" height="24" rx="1.500" fill="url(#np)" />
    <path d="M5 9h14M5 14h14M5 19h14" stroke="#1b6a92" strokeWidth="1.800" />
    <path d="M4 0v4M8 0v4M12 0v4M16 0v4M20 0v4" stroke="#186a8c" strokeWidth="1.800" />
  </svg>,
  <svg key="fold" width="30" height="27" viewBox="0 0 30 27">
    <defs><G id="fo" a="#ffdf73" b="#f5b92e" v /></defs>
    <path d="M0 2c0-1 1-2 2-2h8l3 3v6H0z" fill="#d99a14" /><path d="M0 6l13-1 2-2h13c1 0 2 1 2 2v20c0 1-1 2-2 2H2c-1 0-2-1-2-2z" fill="url(#fo)" />
    <path d="M5 27v-5c0-2 1-3 3-3h14c2 0 3 1 3 3v5z" fill="#1a78cf" /><path d="M9 23h12" stroke="#0c4f94" strokeWidth="1.400" />
  </svg>,
  <svg key="chrome" width="30" height="30" viewBox="0 0 30 30">
    <path d="M2 7.500A15 15 0 0 0 15 30l6.500-11L9 18.700z" fill="#30a24c" />
    <path d="M15 7.500h13a15 15 0 0 1 1 11A15 15 0 0 1 15 30l6.500-11z" fill="#fcc934" />
    <path d="M2 7.500A15 15 0 0 1 28 7.500H15l-6.500 11.200z" fill="#e33b2e" />
    <circle cx="15" cy="15" r="7.300" fill="#fff" /><circle cx="15" cy="15" r="5.700" fill="#2f7bea" />
  </svg>,
  <svg key="edge" width="30" height="30" viewBox="0 0 30 30">
    <defs>
      <linearGradient id="e1" x2="1" y2=".3"><stop stopColor="#2aa7dc" /><stop offset=".5" stopColor="#30c3c8" /><stop offset="1" stopColor="#6be052" /></linearGradient>
      <G id="e2" a="#1b8fd8" b="#0c4a94" />
    </defs>
    <circle cx="15" cy="15" r="15" fill="url(#e2)" />
    <path d="M0 14C1 5 8 0 15 0c9 0 15 6 15 12 0 5-4 8-8 8-3 0-5-1-4-3 2-3 0-8-5-8C7 8 1 10 0 14z" fill="url(#e1)" />
    <path d="M12 13c-2 7 3 14 14 12-3 4-8 5-11 5-6-2-9-11-3-17z" fill="#1272bd" />
    <path d="M18 17c-1 2 1 4 5 3 4 0 6-3 7-5 0 4-1 7-3 9-8 2-13-3-13-8 0-3 4-5 4 1z" fill="#1c1c1c" opacity=".85" />
  </svg>,
  <svg key="ff" width="29" height="29" viewBox="0 0 29 29">
    <defs><linearGradient id="f1" x1=".8" x2=".2" y2="1"><stop stopColor="#fff04a" /><stop offset=".4" stopColor="#ff9a20" /><stop offset=".75" stopColor="#ff3a55" /><stop offset="1" stopColor="#e5258e" /></linearGradient></defs>
    <path d="M4 5l2 3 3-3 1 3 4-1c1-4 3-5 4-7 2 4 5 4 5 8l2-2c6 10 4 23-10 23S-4 17 4 5z" fill="url(#f1)" />
    <circle cx="14" cy="14.500" r="5.800" fill="#7a45d6" /><path d="M6 11c4-2 6 1 10 1-1 3-4 2-5 4-2 0-4-2-5-5z" fill="#ffac2e" />
  </svg>,
  <svg key="snip" width="32" height="31" viewBox="0 0 32 31">
    <rect width="23" height="22" rx="2" fill="#f1f1f1" /><path d="M4 17V4h14v5" fill="none" stroke="#d24a2e" strokeWidth="2.600" strokeDasharray="3 2" />
    <path d="M18 6v14M8 18h16" stroke="#8d959c" strokeWidth="2.400" /><path d="M18 18v6M19 17h6" stroke="#4aa9e0" strokeWidth="2" />
    <circle cx="17" cy="27" r="2.600" fill="none" stroke="#3fa9ea" strokeWidth="2" /><circle cx="28" cy="16" r="2.600" fill="none" stroke="#3fa9ea" strokeWidth="2" />
  </svg>,
  <svg key="vs" width="30" height="30" viewBox="0 0 30 30">
    <path d="M0 10l3-2 20 15v7L1 12z" fill="#1b86cc" /><path d="M0 20l3 2L23 7V0L1 18z" fill="#0f75bd" /><path d="M22 0l8 3.500v23L22 30z" fill="#2ba3ee" />
  </svg>,
];

function Taskbar() {
  return (
    <div className="flex h-[60px] shrink-0 items-center bg-[#1c1c1c] font-['Open_Sans','Noto_Sans',sans-serif] text-white">
      <svg width="30" height="28" viewBox="0 0 30 28" className="ml-[26px] shrink-0">
        <rect width="30" height="28" rx="2" fill="#f2f7fb" /><rect x="2.500" y="2.500" width="12" height="23" rx="1" fill="#1583dd" />
        <rect x="16.500" y="2.500" width="11" height="11.500" rx="1" fill="#35b0f5" /><path d="M17 17h10M17 20h10M17 23h7" stroke="#c9d6e0" strokeWidth="1.200" />
      </svg>
      <svg width="30" height="30" viewBox="0 0 30 30" className="ml-[447px] shrink-0">
        <defs><G id="win" a="#6fe0fc" b="#1194f0" /></defs>
        <path d="M0 1a1 1 0 0 1 1-1h13v14H0zM15 0H28a1 1 0 0 1 1 1v13H15zM0 15h14v14H1a1 1 0 0 1-1-1zM15 15H29v13a1 1 0 0 1-1 1H15z" fill="url(#win)" />
      </svg>
      <div className="ml-[15px] flex h-10 w-[275px] shrink-0 items-center rounded-full border border-[#4a4a4a] bg-[#3a3a3a] pl-[14px] pr-1">
        <svg width="19" height="19" viewBox="0 0 19 19" fill="none" stroke="#e8e8e8" strokeWidth="2"><circle cx="8" cy="7.500" r="6.500" /><path d="M12.500 12.500l5 5.500" strokeWidth="2.600" /></svg>
        <span className="ml-[12px] pt-px text-[16.500px] tracking-[-0.2px] text-[#dcdcdc]">Search</span>
        <div className="ml-auto"><City /></div>
      </div>
      <div className="ml-[6px] flex shrink-0 gap-[5px]">
        {apps.map((a, i) => <Box key={i}>{a}</Box>)}
        <div className="flex h-[50px] w-[50px] flex-col items-center rounded-[5px] border border-[#333] bg-[#2a2a2a] pt-[9px]">
          <TracerLogo size={30} />
          <div className="mt-[5px] h-1 w-5 shrink-0 rounded-full bg-[#4cc2ff]" />
        </div>
      </div>
      <svg width="14" height="8" viewBox="0 0 14 8" fill="none" stroke="#fff" strokeWidth="1.600" className="ml-[125px] shrink-0"><path d="M1 7l6-6 6 6" /></svg>
      <svg width="21" height="18" viewBox="0 0 21 18" className="ml-[23px] mt-1 shrink-0">
        <path d="M4 13c-5 0-5-6 0-7C6-1 14-1 15 5c4 0 4 8 0 8z" fill="#bdbdbd" /><circle cx="15" cy="12" r="5.500" fill="#8b8b8b" /><path d="M13.500 9.500v5M16.500 9.500v5" stroke="#fff" strokeWidth="1.200" />
      </svg>
      <svg width="22" height="22" viewBox="0 0 22 22" className="ml-[19px] shrink-0">
        <path d="M1 9a9.500 9.500 0 0 1 17-4M18 0v5h-5M9 20.500c-3-.5-5-2.500-6.500-5M1.500 20.500v-5.500h5.500" fill="none" stroke="#fff" strokeWidth="1.300" /><circle cx="15.500" cy="16" r="5" fill="#0f7fe0" />
      </svg>
      <span className="ml-[22px] w-[31px] text-[14.500px] tracking-[-0.2px]">ENG</span>
      <svg width="22" height="18" viewBox="0 0 22 18" fill="none" stroke="#fff" strokeWidth="1.500" className="ml-[18px] shrink-0">
        <path d="M1 7c6-7 14-7 20 0M4 10c4.500-5 9.500-5 14 0M7 13c3-3 5-3 8 0" /><circle cx="11" cy="15.500" r="1.500" fill="#fff" stroke="none" />
      </svg>
      <svg width="22" height="18" viewBox="0 0 22 18" fill="none" stroke="#fff" strokeWidth="1.300" className="ml-[9px] shrink-0">
        <path d="M1 6h4l5-5v16l-5-5H1zM13 6q2 3 0 6M15.500 4q4 5 0 10M18 2q5 7 0 14" />
      </svg>
      <svg width="22" height="18" viewBox="0 0 22 18" fill="none" stroke="#fff" strokeWidth="1.400" className="ml-[8px] shrink-0">
        <path d="M9 4h7c2 0 2 1 2 2v8c0 1-1 2-2 2H4c-1 0-2-1-2-2v-3M19.500 8.500h1.500v3h-1.500" /><path d="M4 14v-4l6-3v7z" fill="#fff" stroke="none" /><path d="M5 0L1 7h3l-1 5 5-7H5z" fill="#fff" stroke="none" />
      </svg>
      <div className="ml-auto mr-[25px] text-right text-[14.500px] leading-5 tracking-[-0.1px]">
        6:15 PM
        <br />
        1/20/2025
      </div>
    </div>
  );
}

export default function App() {
  return (
    <div className="flex h-[1080px] w-[1920px] flex-col overflow-hidden bg-white font-['Liberation_Sans',Arial,sans-serif] text-[13px] leading-[15px] text-black">
      <TitleBar />
      <MenuBar />
      <Toolbars />
      <NavBar />
      <div className="flex h-[721px] shrink-0">
        <WorkspaceArea />
        <SimulationPanel />
      </div>
      <TimeBar />
      <div className="flex h-[114px] shrink-0">
        <Palette />
        <PduArea />
      </div>
      <Taskbar />
    </div>
  );
}
